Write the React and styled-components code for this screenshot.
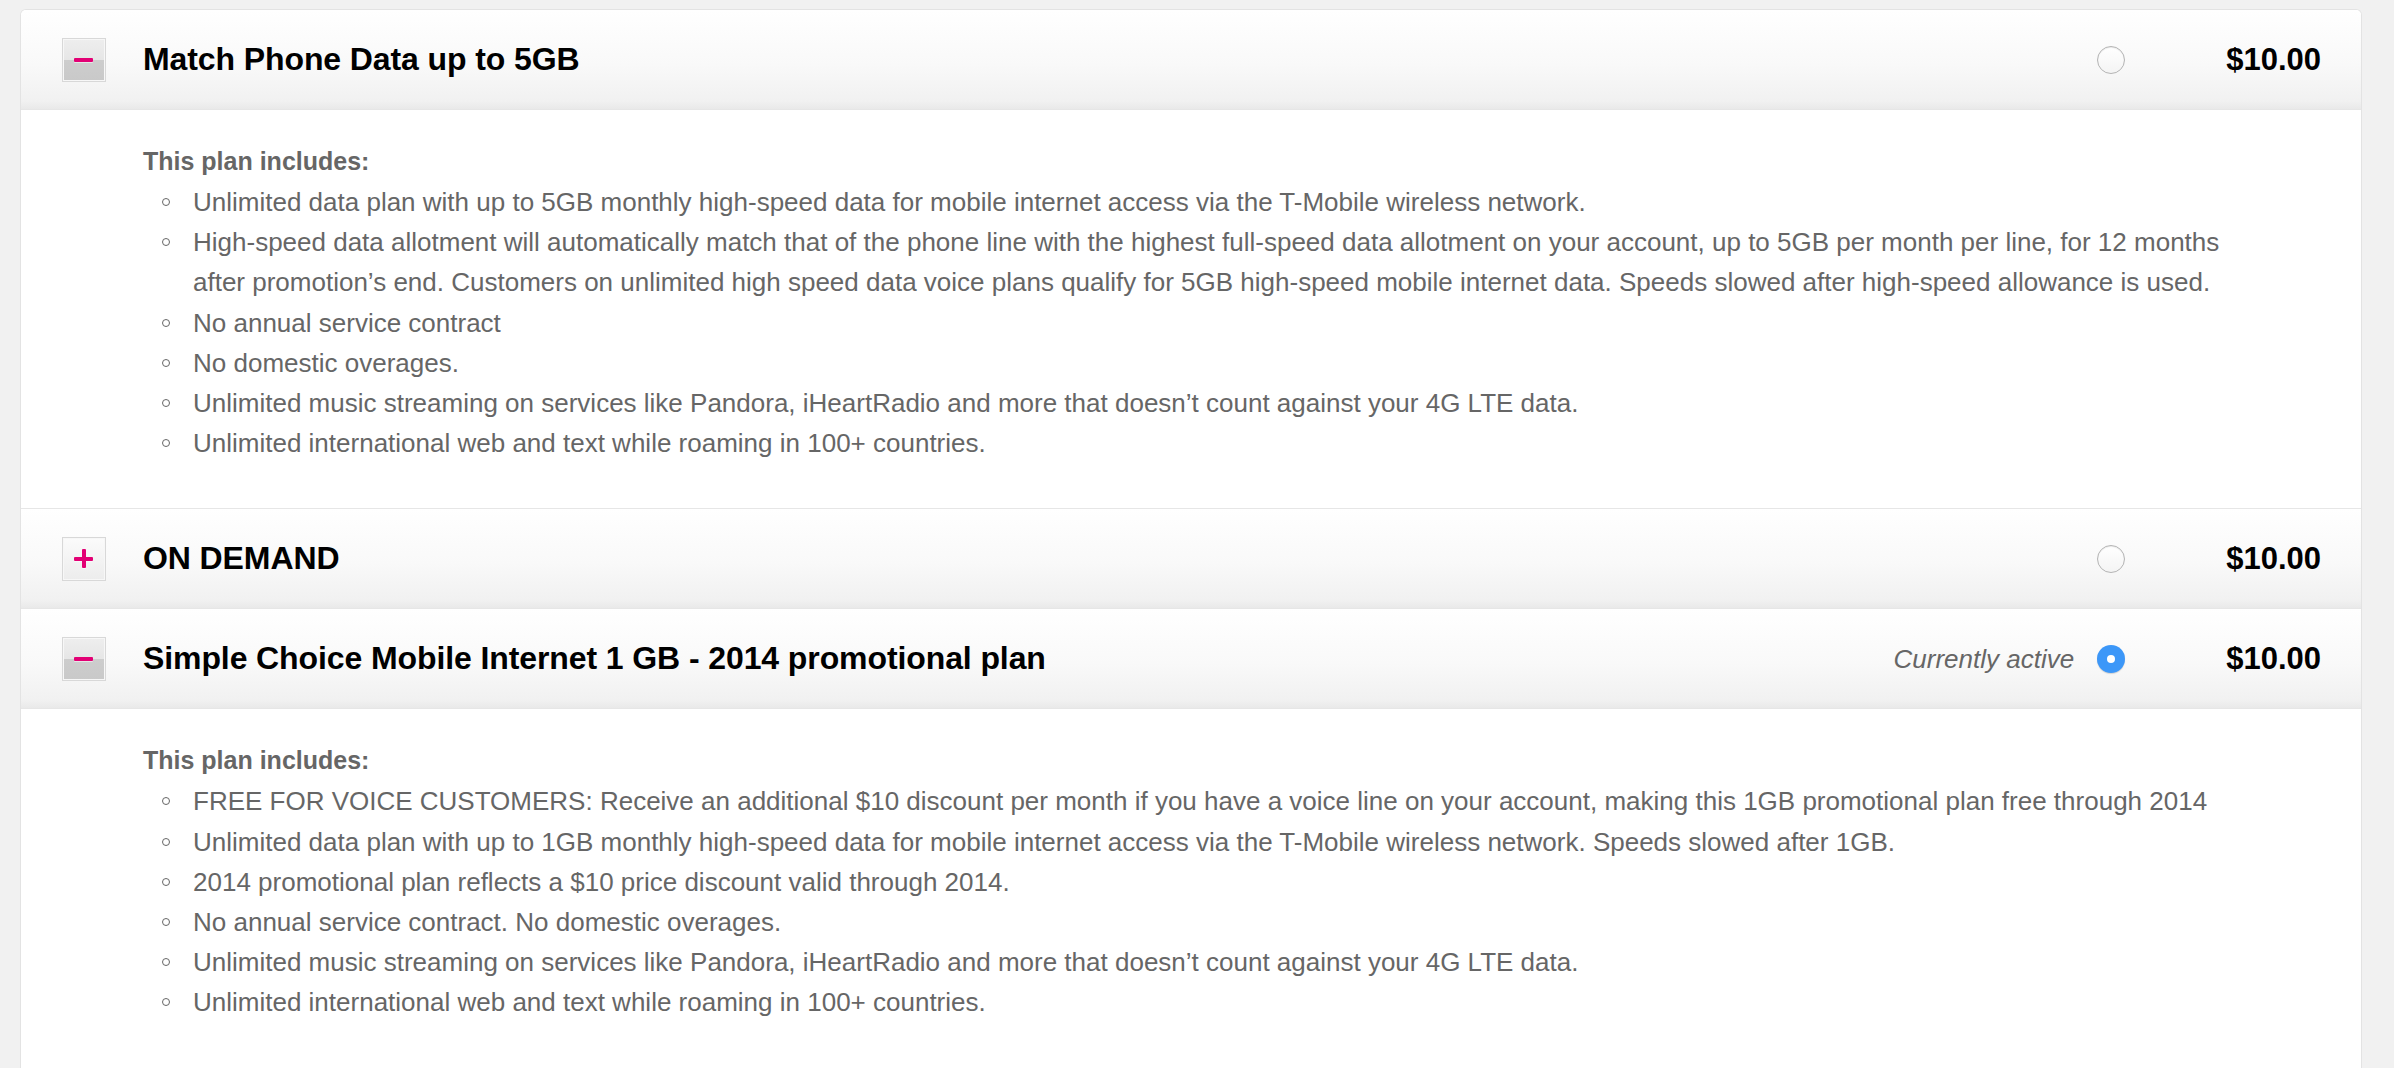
import React from 'react';
import styled, { createGlobalStyle, css } from 'styled-components';

const GlobalStyle = createGlobalStyle`
    body {
        margin: 0;
        background: #f1f1f1;
        font-family: "Liberation Sans", Arial, Helvetica, sans-serif;
    }
`;

const Page = styled.div`
    padding: 9px 32px 0 20px;
`;

const Card = styled.div`
    background: #fff;
    border: 1px solid #e3e3e3;
    border-bottom: none;
    border-radius: 6px 6px 0 0;
    overflow: hidden;
`;

const PlanHeader = styled.div`
    display: flex;
    align-items: center;
    height: 99px;
    padding: 0 40px 0 41px;
    background: linear-gradient(#ffffff 0%, #f9f9f9 55%, #f1f1f1 92%, #e9e9e9 100%);
    border-bottom: 1px solid #e6e6e6;
`;

const Toggle = styled.div`
    position: relative;
    width: 42px;
    height: 42px;
    flex: none;
    border: 1px solid #d8d8d8;
    box-shadow: inset 0 0 0 1px #f7f7f7;
    background: ${({ $open }) => $open
        ? 'linear-gradient(#eeeeee 0%, #e6e6e6 50%, #cdcdcd 50%, #c9c9c9 100%)'
        : 'linear-gradient(#fbfbfb, #ececec)'};

    &::before, &::after {
        content: '';
        position: absolute;
        left: 50%;
        top: 50%;
        background: #e20074;
        border-radius: 1px;
        box-shadow: 0 1px 0 rgba(255, 255, 255, 0.5);
    }
    &::before {
        width: 19px;
        height: 4px;
        margin: -2px 0 0 -10px;
    }
    ${({ $open }) => !$open && css`
        &::after {
            width: 4px;
            height: 19px;
            margin: -10px 0 0 -2px;
        }
    `}
`;

const Title = styled.h2`
    flex: 1;
    margin: 0 0 0 37px;
    font-size: 32px;
    font-weight: bold;
    color: #000;
    letter-spacing: -0.1px;
`;

const Status = styled.span`
    margin: 1px 23px 0 0;
    font-size: 26px;
    font-style: italic;
    color: #666;
`;

const Radio = styled.span`
    width: 28px;
    height: 28px;
    flex: none;
    box-sizing: border-box;
    border-radius: 50%;
    display: flex;
    align-items: center;
    justify-content: center;
    ${({ $checked }) => $checked
        ? css`
            background: #3c97f8;
            box-shadow: 0 1px 1px rgba(0, 0, 0, 0.15);
            &::after {
                content: '';
                width: 8px;
                height: 8px;
                border-radius: 50%;
                background: #fff;
            }
        `
        : css`
            border: 1px solid #b4b4b4;
            background: linear-gradient(#ffffff, #f4f4f4);
            box-shadow: inset 0 1px 1px rgba(0, 0, 0, 0.08);
        `}
`;

const Price = styled.span`
    margin-left: 101px;
    font-size: 31px;
    font-weight: bold;
    color: #000;
`;

const PlanBody = styled.div`
    padding: 31px 117px 45px 122px;
    border-bottom: 1px solid #e6e6e6;
    color: #666;
`;

const Includes = styled.h3`
    margin: 0;
    font-size: 25px;
    line-height: 40px;
    font-weight: bold;
    color: #666;
`;

const Features = styled.ul`
    list-style: none;
    margin: 1px 0 0;
    padding: 0 0 0 50px;
`;

const Feature = styled.li`
    position: relative;
    font-size: 26px;
    line-height: 40.2px;

    &::before {
        content: '';
        position: absolute;
        left: -31px;
        top: 16px;
        width: 6px;
        height: 6px;
        border: 1.5px solid #666;
        border-radius: 50%;
    }
`;

const plans = [
    {
        name: 'Match Phone Data up to 5GB',
        price: '$10.00',
        open: true,
        features: [
            'Unlimited data plan with up to 5GB monthly high-speed data for mobile internet access via the T-Mobile wireless network.',
            'High-speed data allotment will automatically match that of the phone line with the highest full-speed data allotment on your account, up to 5GB per month per line, for 12 months after promotion\u2019s end. Customers on unlimited high speed data voice plans qualify for 5GB high-speed mobile internet data. Speeds slowed after high-speed allowance is used.',
            'No annual service contract',
            'No domestic overages.',
            'Unlimited music streaming on services like Pandora, iHeartRadio and more that doesn\u2019t count against your 4G LTE data.',
            'Unlimited international web and text while roaming in 100+ countries.',
        ],
    },
    {
        name: 'ON DEMAND',
        price: '$10.00',
        open: false,
        features: [],
    },
    {
        name: 'Simple Choice Mobile Internet 1 GB - 2014 promotional plan',
        price: '$10.00',
        open: true,
        active: true,
        features: [
            'FREE FOR VOICE CUSTOMERS: Receive an additional $10 discount per month if you have a voice line on your account, making this 1GB promotional plan free through 2014',
            'Unlimited data plan with up to 1GB monthly high-speed data for mobile internet access via the T-Mobile wireless network. Speeds slowed after 1GB.',
            '2014 promotional plan reflects a $10 price discount valid through 2014.',
            'No annual service contract. No domestic overages.',
            'Unlimited music streaming on services like Pandora, iHeartRadio and more that doesn\u2019t count against your 4G LTE data.',
            'Unlimited international web and text while roaming in 100+ countries.',
        ],
    },
];

function Plan({ plan }) {
    return (
        <>
            <PlanHeader>
                <Toggle $open={plan.open} />
                <Title>{plan.name}</Title>
                {plan.active && <Status>Currently active</Status>}
                <Radio $checked={plan.active} />
                <Price>{plan.price}</Price>
            </PlanHeader>
            {plan.open && (
                <PlanBody>
                    <Includes>This plan includes:</Includes>
                    <Features>
                        {plan.features.map((f) => (
                            <Feature key={f}>{f}</Feature>
                        ))}
                    </Features>
                </PlanBody>
            )}
        </>
    );
}

export default function App() {
    return (
        <Page>
            <GlobalStyle />
            <Card>
                {plans.map((p) => (
                    <Plan key={p.name} plan={p} />
                ))}
            </Card>
        </Page>
    );
}
